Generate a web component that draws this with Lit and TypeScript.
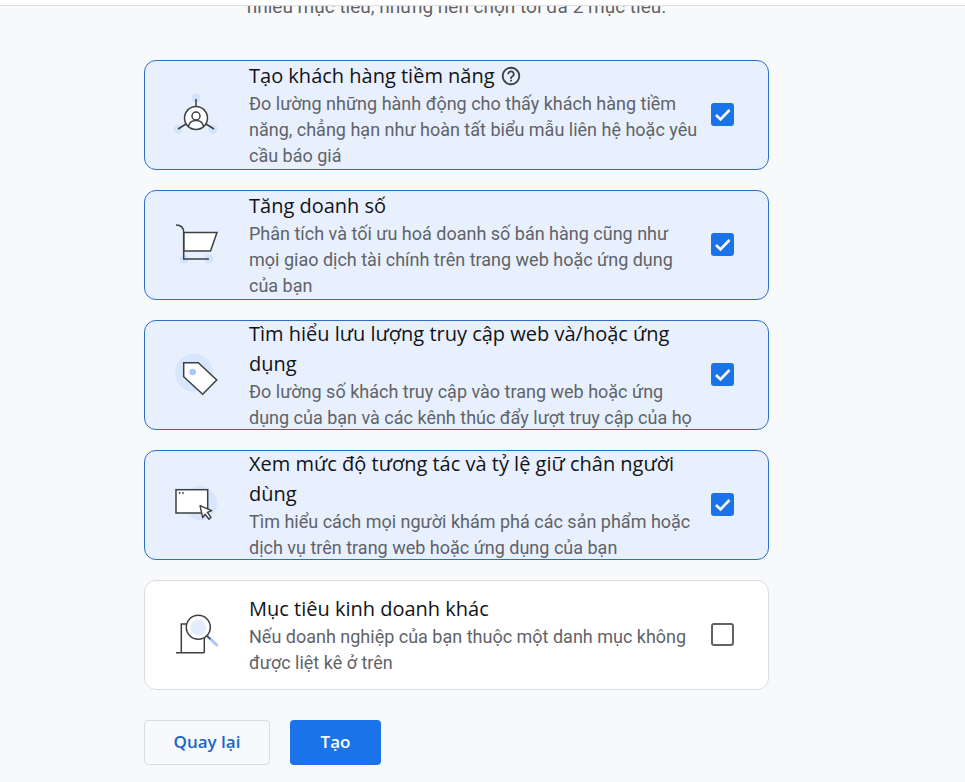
import { LitElement, html, css, svg } from "lit";
import { customElement } from "lit/decorators.js";

const ink = "#3c4043";
const soft = "#d2e3fc";

const icons = {
  leads: svg`
    <circle cx="30" cy="13" r="4.5" fill="${soft}" />
    <circle cx="12" cy="44" r="4.5" fill="${soft}" />
    <circle cx="47" cy="44" r="4.5" fill="${soft}" />
    <path d="M30 14v8M12 44l8-5M48 44l-8-5" stroke="${ink}" stroke-width="1.5" fill="none" />
    <circle cx="30" cy="33" r="11.5" fill="#fff" stroke="${ink}" stroke-width="1.5" />
    <circle cx="30" cy="31" r="4" fill="none" stroke="${ink}" stroke-width="1.5" />
    <path d="M22.5 41c1-4 4-5.500 7.500-5.500s6.500 1.500 7.500 5.500" fill="none" stroke="${ink}" stroke-width="1.5" />`,
  sales: svg`
    <circle cx="18" cy="44" r="4.500" fill="${soft}" />
    <circle cx="43" cy="44" r="4.500" fill="${soft}" />
    <path d="M17.700 17.500H51L44.500 36H17.700z" fill="#fff" stroke="${ink}" stroke-width="1.500" />
    <path d="M10 10c5 0 7.700 3 7.700 7.500V44H43" fill="none" stroke="${ink}" stroke-width="1.500" />`,
  traffic: svg`
    <circle cx="28" cy="27.700" r="19" fill="${soft}" opacity="0.75" />
    <path d="M17.700 17.700h14.600L50.700 35 36.700 49.300 17.700 31.700z" fill="#fff" stroke="${ink}" stroke-width="1.500" />
    <circle cx="26.700" cy="27" r="3.300" fill="#a8c7fa" />`,
  engage: svg`
    <circle cx="34" cy="28.300" r="17" fill="${soft}" opacity="0.75" />
    <rect x="10" y="14.700" width="31.700" height="23.300" fill="#fff" stroke="${ink}" stroke-width="1.500" />
    <circle cx="13.700" cy="18" r="0.900" fill="${ink}" />
    <circle cx="17" cy="18" r="0.900" fill="${ink}" />
    <path d="M34 30.700l2.700 12 2.300-3.400 4 5 2-2-3.700-5 4.400-1.600z" fill="#fff" stroke="${ink}" stroke-width="1.400" stroke-linejoin="round" />`,
  other: svg`
    <path d="M15.300 47.700V19h23v28.700M10 47.700h28.300" fill="none" stroke="${ink}" stroke-width="1.500" />
    <path d="M41.300 31l9.400 9" stroke="#a8c7fa" stroke-width="3" stroke-linecap="round" />
    <path d="M41 31l3.500 3.300" stroke="${ink}" stroke-width="1.500" />
    <circle cx="32.300" cy="22.300" r="12" fill="#fff" stroke="${ink}" stroke-width="1.500" />
    <circle cx="32.300" cy="22.300" r="8" fill="#e3edfd" />`,
};

const goals = [
  {
    icon: icons.leads,
    title: "Tạo khách hàng tiềm năng",
    help: true,
    desc: "Đo lường những hành động cho thấy khách hàng tiềm năng, chẳng hạn như hoàn tất biểu mẫu liên hệ hoặc yêu cầu báo giá",
    on: true,
  },
  {
    icon: icons.sales,
    title: "Tăng doanh số",
    desc: "Phân tích và tối ưu hoá doanh số bán hàng cũng như mọi giao dịch tài chính trên trang web hoặc ứng dụng của bạn",
    on: true,
  },
  {
    icon: icons.traffic,
    title: "Tìm hiểu lưu lượng truy cập web và/hoặc ứng dụng",
    desc: "Đo lường số khách truy cập vào trang web hoặc ứng dụng của bạn và các kênh thúc đẩy lượt truy cập của họ",
    on: true,
  },
  {
    icon: icons.engage,
    title: "Xem mức độ tương tác và tỷ lệ giữ chân người dùng",
    desc: "Tìm hiểu cách mọi người khám phá các sản phẩm hoặc dịch vụ trên trang web hoặc ứng dụng của bạn",
    on: true,
  },
  {
    icon: icons.other,
    title: "Mục tiêu kinh doanh khác",
    desc: "Nếu doanh nghiệp của bạn thuộc một danh mục không được liệt kê ở trên",
    on: false,
  },
];

@customElement("app-root")
export class AppRoot extends LitElement {
  static styles = css`
    :host {
      display: flex;
      flex-direction: column;
      height: 782px;
      overflow: hidden;
      background: #f8f9fb;
      font-family: Roboto, "Liberation Sans", sans-serif;
    }

    .topbar {
      height: 5px;
      flex: none;
      background: #fff;
      border-bottom: 1px solid #dadce0;
    }

    main {
      flex: 1;
      overflow: hidden;
      padding-left: 144px;
    }

    .column {
      width: 625px;
    }

    .intro {
      margin: -12px 0 40px;
      font-size: 19px;
      line-height: 26px;
      color: #5f6368;
      text-align: center;
    }

    .goals {
      display: flex;
      flex-direction: column;
      gap: 20px;
    }

    .goal {
      box-sizing: border-box;
      height: 110px;
      display: flex;
      align-items: center;
      background: #fff;
      border: 1px solid #dadce0;
      border-radius: 12px;
    }

    .goal.on {
      background: #e8f0fe;
      border-color: #2a6fc4;
    }

    .icon {
      width: 104px;
      flex: none;
      display: flex;
      padding-left: 21px;
      box-sizing: border-box;
    }

    .icon svg {
      width: 60px;
      height: 60px;
    }

    .text {
      width: 451px;
      flex: none;
    }

    .title {
      font-family: "Open Sans", sans-serif;
      font-size: 20px;
      font-weight: 500;
      line-height: 30px;
      color: #111317;
    }

    .title svg {
      width: 22px;
      height: 22px;
      margin-left: 5px;
      vertical-align: -4px;
    }

    .desc {
      font-size: 18px;
      line-height: 26px;
      color: #5f6368;
    }

    .check {
      width: 23px;
      height: 23px;
      margin: 0 0 1px 11px;
      flex: none;
      box-sizing: border-box;
      border: 2px solid #5f6368;
      border-radius: 3px;
    }

    .check.on {
      background: #1a73e8;
      border: none;
    }

    .check svg {
      display: block;
      width: 23px;
      height: 23px;
    }

    .actions {
      display: flex;
      gap: 20px;
      margin-top: 30px;
    }

    button {
      height: 45px;
      box-sizing: border-box;
      padding: 0 0 3px;
      border-radius: 4px;
      font-family: "Open Sans", sans-serif;
      font-size: 17px;
      font-weight: 600;
      cursor: pointer;
    }

    .back {
      width: 126px;
      background: transparent;
      border: 1px solid #dadce0;
      color: #1a66c9;
    }

    .create {
      width: 91px;
      background: #1a73e8;
      border: none;
      color: #fff;
    }
  `;

  render() {
    return html`
      <div class="topbar"></div>
      <main>
        <div class="column">
          <p class="intro">nhiều mục tiêu, nhưng nên chọn tối đa 2 mục tiêu.</p>
          <div class="goals">
            ${goals.map(
              (g) => html`
                <div class="goal ${g.on ? "on" : ""}">
                  <div class="icon">
                    <svg viewBox="0 0 60 60">${g.icon}</svg>
                  </div>
                  <div class="text">
                    <div class="title">
                      ${g.title}${g.help
                        ? html`<svg viewBox="0 0 24 24" fill="#3c4043">
                            <path
                              d="M11 18h2v-2h-2v2zm1-16C6.480 2 2 6.480 2 12s4.480 10 10 10 10-4.480 10-10S17.520 2 12 2zm0 18c-4.410 0-8-3.590-8-8s3.590-8 8-8 8 3.590 8 8-3.590 8-8 8zm0-14c-2.210 0-4 1.790-4 4h2c0-1.100.9-2 2-2s2 .9 2 2c0 2-3 1.750-3 5h2c0-2.250 3-2.500 3-5 0-2.210-1.790-4-4-4z"
                            />
                          </svg>`
                        : ""}
                    </div>
                    <div class="desc">${g.desc}</div>
                  </div>
                  <div class="check ${g.on ? "on" : ""}">
                    ${g.on
                      ? html`<svg viewBox="0 0 23 23">
                          <path d="M5 12l4.500 4.500L18.500 7" fill="none" stroke="#fff" stroke-width="2.600" />
                        </svg>`
                      : ""}
                  </div>
                </div>
              `
            )}
          </div>
          <div class="actions">
            <button class="back">Quay lại</button>
            <button class="create">Tạo</button>
          </div>
        </div>
      </main>
    `;
  }
}
